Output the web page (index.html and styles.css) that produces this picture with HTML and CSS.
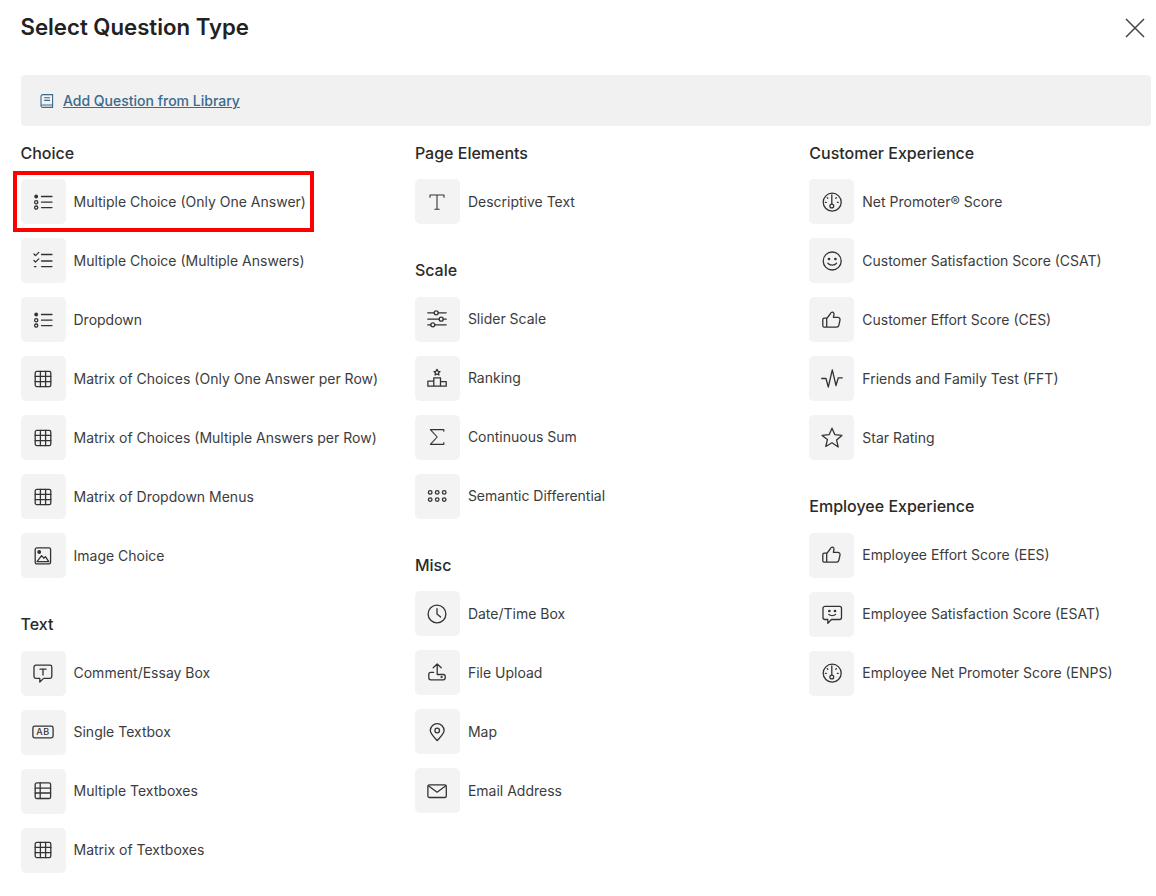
FILE: index.html
```html
<!DOCTYPE html>
<html lang="en">
<head>
<meta charset="utf-8">
<title>Select Question Type</title>
<link rel="stylesheet" href="styles.css">
</head>
<body>
<svg class="defs" xmlns="http://www.w3.org/2000/svg">
  <symbol id="i-list" viewBox="0 0 24 24"><circle cx="5.2" cy="6.5" r="1.9" fill="currentColor" stroke="none"/><circle cx="5.2" cy="12.2" r="1.6"/><circle cx="5.2" cy="17.6" r="1.6"/><path d="M10.5 6.5H21M10.5 12.2H21M10.5 17.6H21"/></symbol>
  <symbol id="i-check" viewBox="0 0 24 24"><path d="M3 5l1.5 1.6L7.8 3.4M3 11.5l1.5 1.6 3.3-3.2M3.4 17.6H5M10.5 5.5H21M10.5 12H21M10.5 17.6H21"/></symbol>
  <symbol id="i-grid" viewBox="0 0 24 24"><rect x="4.2" y="4.4" width="15.6" height="15.2" rx="1.6"/><path d="M9.4 4.4V19.6M14.6 4.4V19.6M4.2 9.4H19.8M4.2 14.6H19.8"/></symbol>
  <symbol id="i-image" viewBox="0 0 24 24"><rect x="4.2" y="3.9" width="15.4" height="16" rx="1.6"/><circle cx="8.2" cy="8" r="1.3" fill="currentColor"/><path d="M6 17.6l4.6-6 2.2 2.6 1.6-1.6 3.4 5z"/></symbol>
  <symbol id="i-comment" viewBox="0 0 24 24"><path d="M5 4.2H19a1.8 1.8 0 0 1 1.8 1.8V15.6a1.8 1.8 0 0 1-1.8 1.8H12.6L8.8 21V17.4H5A2 2 0 0 1 3 15.6V6A1.8 1.800 0 0 1 5 4.200z"/><path d="M9 8.200H15M12 8.200V14"/></symbol>
  <symbol id="i-ab" viewBox="0 0 24 24"><rect x="1.900" y="6.200" width="20.200" height="11.600" rx="1.800"/><text x="12" y="15.200" text-anchor="middle" class="ab-text">AB</text></symbol>
  <symbol id="i-boxes" viewBox="0 0 24 24"><rect x="4.200" y="3.900" width="15.400" height="15.600" rx="1.600"/><path d="M9.200 3.900V19.500M4.200 9.200H19.600M4.200 14H19.600"/></symbol>
  <symbol id="i-t" viewBox="0 0 24 24"><path class="thin" d="M5 7.800V5H19V7.800M12 5V19.200M9.400 19.200H14.600"/></symbol>
  <symbol id="i-slider" viewBox="0 0 24 24"><path d="M2.800 5.800H9.200M13.200 5.800H21.200M2.800 12.200H14.200M18.200 12.200H21.200M2.800 17.800H5.800M9.800 17.800H21.200"/><circle cx="11.200" cy="5.800" r="2"/><circle cx="16.200" cy="12.200" r="2"/><circle cx="7.800" cy="17.800" r="2"/></symbol>
  <symbol id="i-rank" viewBox="0 0 24 24"><path d="M12 3.400l1 1.900 2 .3-1.500 1.400.4 2-1.900-1-1.900 1 .4-2-1.500-1.400 2-.3z"/><path d="M8.800 20.200V11.800H15.500V20.200M2.900 20.200V15.200H8.800M15.500 15.600H21.200V20.200H2.900"/></symbol>
  <symbol id="i-sigma" viewBox="0 0 24 24"><path class="thin" d="M18.800 6.800V4.600H5.400L12.200 12 5.400 19.400H18.800V17.200"/></symbol>
  <symbol id="i-dots" viewBox="0 0 24 24"><circle cx="5.200" cy="8.400" r="1.800"/><circle cx="12.200" cy="8.400" r="1.800"/><circle cx="19.200" cy="8.400" r="1.800"/><circle cx="5.200" cy="15.600" r="1.800"/><circle cx="12.200" cy="15.600" r="1.800"/><circle cx="19.200" cy="15.600" r="1.800"/></symbol>
  <symbol id="i-clock" viewBox="0 0 24 24"><circle cx="12" cy="12" r="8.900"/><path d="M12 6.600V12L15.600 15"/></symbol>
  <symbol id="i-upload" viewBox="0 0 24 24"><path d="M12.200 13.500V3M8.200 6.800L12.200 3l4 3.800M8.600 11.400H5.800a2 2 0 0 0-2 2V16.800a2 2 0 0 0 2 2H18.200a2 2 0 0 0 2-2V15.500a2 2 0 0 0-2-2H12.200"/><circle cx="16.600" cy="16.100" r=".5" fill="currentColor"/></symbol>
  <symbol id="i-pin" viewBox="0 0 24 24"><path d="M12.200 20.600C9.400 17.400 5.300 14 5.300 10.600a6.900 6.900 0 0 1 13.800 0C19.100 14 15 17.400 12.200 20.600z"/><circle cx="12.200" cy="10.500" r="2.300"/></symbol>
  <symbol id="i-mail" viewBox="0 0 24 24"><rect x="2.900" y="5.800" width="18.400" height="12.700" rx="1.600"/><path d="M3.400 6.800L12.100 13.200 20.800 6.800"/></symbol>
  <symbol id="i-gauge" viewBox="0 0 24 24"><circle cx="12.200" cy="12.200" r="9"/><circle cx="11.800" cy="16" r="1.900"/><path d="M11.800 14.100V4.800M7.200 7.600L7.800 8.200M16.400 7.600L15.800 8.200M5.400 12.400H6.200M17.400 12.400H18.200"/></symbol>
  <symbol id="i-smile" viewBox="0 0 24 24"><circle cx="12.200" cy="12" r="9"/><circle cx="9" cy="10" r=".7" fill="currentColor"/><circle cx="15.400" cy="10" r=".7" fill="currentColor"/><path d="M7.800 14.200c1.800 2.600 7 2.600 8.800 0"/></symbol>
  <symbol id="i-thumb" viewBox="0 0 24 24"><path d="M6.700 10.200H4.200A1.500 1.500 0 0 0 2.800 11.700V17.700A1.500 1.500 0 0 0 4.200 19.200H6.700zM6.700 10.600L10.200 6C10.800 4.800 11.600 4.200 12.400 4.200 13.600 4.200 14.200 5.400 13.900 6.800L13.400 9.400H17.800A2.200 2.200 0 0 1 20 12L18.900 17.200A2.400 2.400 0 0 1 16.500 19.200H6.700"/></symbol>
  <symbol id="i-pulse" viewBox="0 0 24 24"><path d="M1.700 11.500H6L8.300 20 12.300 2.800 16 18.500 18.300 10.800H22.300"/></symbol>
  <symbol id="i-star" viewBox="0 0 24 24"><path d="M12 2.200l2.900 6.500 7 .7-5.300 4.700 1.600 6.900L12 16.800 5.800 20.500l1.600-6.900L2.100 9.400l7-.7z"/></symbol>
  <symbol id="i-bubble" viewBox="0 0 24 24"><path d="M5 4.300H19.500a2 2 0 0 1 2 2V15.500a2 2 0 0 1-2 2H11.500L7.800 21.300V17.500H5a2 2 0 0 1-2-2V6.300a2 2 0 0 1 2-2z"/><circle cx="9.400" cy="9" r=".7" fill="currentColor"/><circle cx="15" cy="9" r=".7" fill="currentColor"/><path d="M8.800 12.400c1.500 1.700 5.200 1.700 6.800 0"/></symbol>
</svg>

<header class="top">
  <h1 class="title">Select Question Type</h1>
  <button class="close" type="button" aria-label="Close">
    <svg class="close-icon" viewBox="0 0 20 20"><path d="M1 1L19 19M19 1L1 19"/></svg>
  </button>
</header>

<div class="banner">
  <svg class="book" viewBox="0 0 14 14"><path d="M3 .6H12.600V11H3A1.800 1.800 0 0 0 1 12.200V2.400A1.800 1.800 0 0 1 3 .6zM1 12A1.500 1.500 0 0 0 2.800 13.400H12.600V11M4.200 3.800H10M4.200 6.400H10"/></svg>
  <a class="link" href="#">Add Question from Library</a>
</div>

<main class="columns">
  <div class="column">
    <section class="group">
      <h2 class="heading">Choice</h2>
      <div class="item item-marked"><span class="tile"><svg class="icon"><use href="#i-list"/></svg></span><span class="label">Multiple Choice (Only One Answer)</span><span class="marker"></span></div>
      <div class="item"><span class="tile"><svg class="icon"><use href="#i-check"/></svg></span><span class="label">Multiple Choice (Multiple Answers)</span></div>
      <div class="item"><span class="tile"><svg class="icon"><use href="#i-list"/></svg></span><span class="label">Dropdown</span></div>
      <div class="item"><span class="tile"><svg class="icon"><use href="#i-grid"/></svg></span><span class="label">Matrix of Choices (Only One Answer per Row)</span></div>
      <div class="item"><span class="tile"><svg class="icon"><use href="#i-grid"/></svg></span><span class="label">Matrix of Choices (Multiple Answers per Row)</span></div>
      <div class="item"><span class="tile"><svg class="icon"><use href="#i-grid"/></svg></span><span class="label">Matrix of Dropdown Menus</span></div>
      <div class="item"><span class="tile"><svg class="icon"><use href="#i-image"/></svg></span><span class="label">Image Choice</span></div>
    </section>
    <section class="group">
      <h2 class="heading">Text</h2>
      <div class="item"><span class="tile"><svg class="icon"><use href="#i-comment"/></svg></span><span class="label">Comment/Essay Box</span></div>
      <div class="item"><span class="tile"><svg class="icon"><use href="#i-ab"/></svg></span><span class="label">Single Textbox</span></div>
      <div class="item"><span class="tile"><svg class="icon"><use href="#i-boxes"/></svg></span><span class="label">Multiple Textboxes</span></div>
      <div class="item"><span class="tile"><svg class="icon"><use href="#i-grid"/></svg></span><span class="label">Matrix of Textboxes</span></div>
    </section>
  </div>
  <div class="column">
    <section class="group">
      <h2 class="heading">Page Elements</h2>
      <div class="item"><span class="tile"><svg class="icon"><use href="#i-t"/></svg></span><span class="label">Descriptive Text</span></div>
    </section>
    <section class="group">
      <h2 class="heading">Scale</h2>
      <div class="item"><span class="tile"><svg class="icon"><use href="#i-slider"/></svg></span><span class="label">Slider Scale</span></div>
      <div class="item"><span class="tile"><svg class="icon"><use href="#i-rank"/></svg></span><span class="label">Ranking</span></div>
      <div class="item"><span class="tile"><svg class="icon"><use href="#i-sigma"/></svg></span><span class="label">Continuous Sum</span></div>
      <div class="item"><span class="tile"><svg class="icon"><use href="#i-dots"/></svg></span><span class="label">Semantic Differential</span></div>
    </section>
    <section class="group">
      <h2 class="heading">Misc</h2>
      <div class="item"><span class="tile"><svg class="icon"><use href="#i-clock"/></svg></span><span class="label">Date/Time Box</span></div>
      <div class="item"><span class="tile"><svg class="icon"><use href="#i-upload"/></svg></span><span class="label">File Upload</span></div>
      <div class="item"><span class="tile"><svg class="icon"><use href="#i-pin"/></svg></span><span class="label">Map</span></div>
      <div class="item"><span class="tile"><svg class="icon"><use href="#i-mail"/></svg></span><span class="label">Email Address</span></div>
    </section>
  </div>
  <div class="column">
    <section class="group">
      <h2 class="heading">Customer Experience</h2>
      <div class="item"><span class="tile"><svg class="icon"><use href="#i-gauge"/></svg></span><span class="label">Net Promoter® Score</span></div>
      <div class="item"><span class="tile"><svg class="icon"><use href="#i-smile"/></svg></span><span class="label">Customer Satisfaction Score (CSAT)</span></div>
      <div class="item"><span class="tile"><svg class="icon"><use href="#i-thumb"/></svg></span><span class="label">Customer Effort Score (CES)</span></div>
      <div class="item"><span class="tile"><svg class="icon"><use href="#i-pulse"/></svg></span><span class="label">Friends and Family Test (FFT)</span></div>
      <div class="item"><span class="tile"><svg class="icon"><use href="#i-star"/></svg></span><span class="label">Star Rating</span></div>
    </section>
    <section class="group">
      <h2 class="heading">Employee Experience</h2>
      <div class="item"><span class="tile"><svg class="icon"><use href="#i-thumb"/></svg></span><span class="label">Employee Effort Score (EES)</span></div>
      <div class="item"><span class="tile"><svg class="icon"><use href="#i-bubble"/></svg></span><span class="label">Employee Satisfaction Score (ESAT)</span></div>
      <div class="item"><span class="tile"><svg class="icon"><use href="#i-gauge"/></svg></span><span class="label">Employee Net Promoter Score (ENPS)</span></div>
    </section>
  </div>
</main>
</body>
</html>
```

FILE: styles.css
```css
* {
  box-sizing: border-box;
}

html,
body {
  height: 100%;
}

body {
  margin: 0;
  padding: 13px 5px 0 20.5px;
  overflow: hidden;
  background: #fff;
  color: #3c3c3c;
  font-family: Inter, "Liberation Sans", sans-serif;
  font-size: 14px;
}

.defs {
  display: none;
}

.top {
  display: flex;
  align-items: center;
  justify-content: space-between;
  height: 28px;
  padding-right: 6px;
  margin-bottom: 34px;
}

.title {
  margin: 0;
  font-size: 22.2px;
  line-height: 28px;
  font-weight: 600;
  color: #222;
}

.close {
  display: flex;
  width: 20px;
  height: 20px;
  margin-top: 2px;
  padding: 0;
  border: 0;
  background: none;
  cursor: pointer;
}

.close-icon {
  width: 20px;
  height: 20px;
  fill: none;
  stroke: #444;
  stroke-width: 1.5;
}

.banner {
  display: flex;
  align-items: center;
  gap: 9px;
  height: 51px;
  padding-left: 19.5px;
  border-radius: 4px;
  background: #f1f1f1;
}

.book {
  width: 14px;
  height: 14px;
  fill: none;
  stroke: #3a6a8c;
  stroke-width: 1.1;
}

.link {
  color: #3a6a8c;
  font-weight: 500;
}

.columns {
  display: grid;
  grid-template-columns: 394.4px 394.4px 1fr;
  margin-top: 14.625px;
}

.column {
  display: flex;
  flex-direction: column;
  gap: 34.125px;
}

.group {
  display: flex;
  flex-direction: column;
  gap: 14px;
}

.heading {
  margin: 0 0 0.375px;
  font-size: 16px;
  line-height: 24px;
  font-weight: 450;
  color: #2a2a2a;
}

.item {
  position: relative;
  display: flex;
  align-items: center;
  gap: 8px;
  height: 45px;
}

.tile {
  display: flex;
  align-items: center;
  justify-content: center;
  flex: none;
  width: 45px;
  height: 45px;
  border-radius: 5px;
  background: #f3f3f3;
}

.icon {
  width: 24px;
  height: 24px;
  fill: none;
  stroke: #333;
  stroke-width: 1.3;
  stroke-linecap: round;
  stroke-linejoin: round;
  color: #333;
}

.thin {
  stroke-width: 1.1;
  stroke-linecap: butt;
}

.ab-text {
  font-family: Inter, sans-serif;
  font-size: 9px;
  font-weight: 500;
  letter-spacing: 0.6px;
  fill: #333;
  stroke: none;
}

.label {
  line-height: 17px;
  margin-bottom: 0.125px;
  white-space: nowrap;
}

.marker {
  position: absolute;
  top: -8px;
  left: -7.5px;
  width: 301px;
  height: 61px;
  border: 4px solid #f00;
  pointer-events: none;
}
```
